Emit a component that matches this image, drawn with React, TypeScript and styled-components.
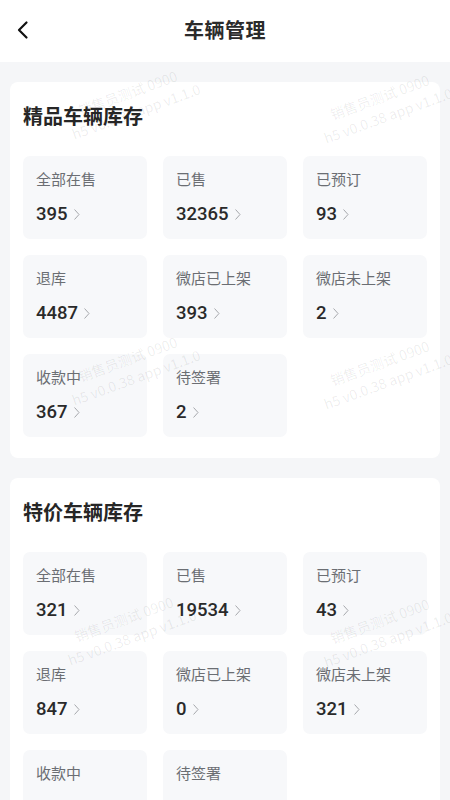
import React from "react";
import styled, { createGlobalStyle } from "styled-components";

const Global = createGlobalStyle`
  html, body { margin: 0; padding: 0; }
  body {
    background: #f5f6f8;
    font-family: "Noto Sans CJK SC", "Noto Sans", sans-serif;
    -webkit-font-smoothing: antialiased;
  }
`;

const Page = styled.div`
  position: relative;
  width: 450px;
  min-height: 800px;
  background: #f5f6f8;
  overflow: hidden;
`;

const Header = styled.header`
  height: 62px;
  background: #ffffff;
  display: flex;
  align-items: center;
  justify-content: center;
  position: relative;
`;

const BackButton = styled.button`
  position: absolute;
  left: 11px;
  top: 18px;
  width: 24px;
  height: 24px;
  border: 0;
  padding: 0;
  background: transparent;
  display: flex;
  align-items: center;
  justify-content: center;
`;

const HeaderTitle = styled.h1`
  margin: 0 0 3px;
  font-size: 20px;
  font-weight: 700;
  color: #2b2b2b;
  letter-spacing: 0.5px;
`;

const Content = styled.main`
  display: flex;
  flex-direction: column;
  gap: 20px;
  padding: 20px 10px;
`;

const Card = styled.section`
  background: #ffffff;
  border-radius: 8px;
  padding: 20px 13px 21px;
`;

const CardTitle = styled.h2`
  margin: 0 0 26px;
  font-size: 20px;
  line-height: 28px;
  font-weight: 700;
  color: #262626;
`;

const Grid = styled.div`
  display: grid;
  grid-template-columns: repeat(3, 1fr);
  gap: 16px;
`;

const Tile = styled.div`
  background: #f7f8fa;
  border-radius: 7px;
  height: 83px;
  padding: 12px 13px 0;
  box-sizing: border-box;
`;

const Label = styled.div`
  font-size: 15px;
  line-height: 21px;
  color: #6b6e73;
`;

const Value = styled.div`
  margin-top: 13px;
  display: flex;
  align-items: center;
  font-family: Roboto, "Liberation Sans", sans-serif;
  font-size: 18.5px;
  line-height: 24px;
  font-weight: 500;
  color: #2a2a2a;
`;

const Chevron = styled.svg`
  margin-left: 6px;
  width: 6px;
  height: 11px;
`;

const Watermarks = styled.div`
  position: absolute;
  inset: 0;
  pointer-events: none;
`;

const Mark = styled.div<{ $x: number; $y: number }>`
  position: absolute;
  left: ${(p) => p.$x}px;
  top: ${(p) => p.$y}px;
  transform: rotate(-20deg);
  transform-origin: left top;
  font-size: 14px;
  line-height: 20px;
  color: rgba(0, 0, 0, 0.075);
  white-space: nowrap;
  font-family: "Noto Sans CJK SC", "Noto Sans", sans-serif;
`;

const MarkLine = styled.div<{ $indent?: number }>`
  padding-left: ${(p) => p.$indent ?? 0}px;
`;

type Item = { label: string; value?: string };

const premium: Item[] = [
  { label: "全部在售", value: "395" },
  { label: "已售", value: "32365" },
  { label: "已预订", value: "93" },
  { label: "退库", value: "4487" },
  { label: "微店已上架", value: "393" },
  { label: "微店未上架", value: "2" },
  { label: "收款中", value: "367" },
  { label: "待签署", value: "2" },
];

const special: Item[] = [
  { label: "全部在售", value: "321" },
  { label: "已售", value: "19534" },
  { label: "已预订", value: "43" },
  { label: "退库", value: "847" },
  { label: "微店已上架", value: "0" },
  { label: "微店未上架", value: "321" },
  { label: "收款中", value: "0" },
  { label: "待签署", value: "0" },
];

const marks = [
  { x: 62, y: 106 },
  { x: 314, y: 110 },
  { x: 62, y: 372 },
  { x: 314, y: 376 },
  { x: 58, y: 632 },
  { x: 314, y: 634 },
];

function StatCard({ title, items }: { title: string; items: Item[] }) {
  return (
    <Card>
      <CardTitle>{title}</CardTitle>
      <Grid>
        {items.map((it) => (
          <Tile key={it.label}>
            <Label>{it.label}</Label>
            <Value>
              {it.value}
              <Chevron viewBox="0 0 6 11" fill="none">
                <path d="M0.8 0.8 L5 5.5 L0.8 10.2" stroke="#a6a8ac" strokeWidth="1" strokeLinecap="round" strokeLinejoin="round" />
              </Chevron>
            </Value>
          </Tile>
        ))}
      </Grid>
    </Card>
  );
}

export default function App() {
  return (
    <>
      <Global />
      <Page>
        <Header>
          <BackButton aria-label="返回">
            <svg width="14" height="20" viewBox="0 0 14 20" fill="none">
              <path d="M10.5 2.5 L3 10 L10.5 17.5" stroke="#111" strokeWidth="2.2" strokeLinecap="round" strokeLinejoin="round" />
            </svg>
          </BackButton>
          <HeaderTitle>车辆管理</HeaderTitle>
        </Header>
        <Content>
          <StatCard title="精品车辆库存" items={premium} />
          <StatCard title="特价车辆库存" items={special} />
        </Content>
        <Watermarks>
          {marks.map((m, i) => (
            <Mark key={i} $x={m.x} $y={m.y}>
              <MarkLine $indent={14}>销售员测试 0900</MarkLine>
              <MarkLine>h5 v0.0.38 app v1.1.0</MarkLine>
            </Mark>
          ))}
        </Watermarks>
      </Page>
    </>
  );
}
